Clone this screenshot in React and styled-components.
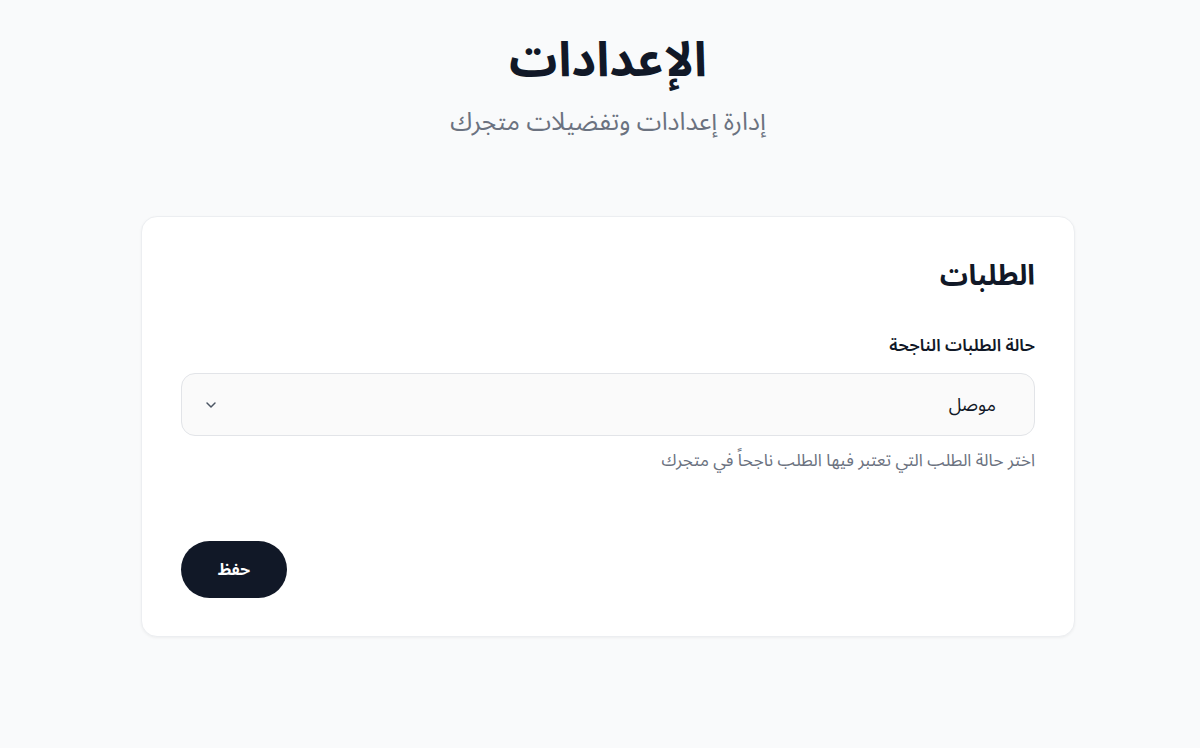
import React from 'react';
import styled, { createGlobalStyle } from 'styled-components';

const GlobalStyle = createGlobalStyle`
  html, body {
    margin: 0;
    padding: 0;
    background: #f9fafb;
  }
  body {
    font-family: 'Noto Sans Arabic', 'Noto Sans', 'DejaVu Sans', sans-serif;
    color: #111827;
  }
`;

const Page = styled.div`
  min-height: 748px;
  padding: 25px 0 40px 16px;
  box-sizing: border-box;
  direction: rtl;
`;

const Header = styled.header`
  text-align: center;
  margin-bottom: 76px;
`;

const Title = styled.h1`
  font-size: 48px;
  font-weight: 700;
  margin: 0;
  line-height: 72px;
  color: #111827;
`;

const Subtitle = styled.p`
  font-size: 25px;
  color: #6b7280;
  margin: 7px 0 0;
  line-height: 36px;
`;

const Card = styled.section`
  width: 934px;
  margin: 0 auto;
  box-sizing: border-box;
  background: #ffffff;
  border: 1px solid #eceef1;
  border-radius: 16px;
  box-shadow: 0 1px 3px rgba(0, 0, 0, 0.05);
  padding: 38px 39px 38px 39px;
`;

const SectionTitle = styled.h2`
  font-size: 28px;
  font-weight: 700;
  margin: 2px 0 38px;
  line-height: 1.4;
`;

const Field = styled.div`
  display: flex;
  flex-direction: column;
`;

const Label = styled.label`
  font-size: 17px;
  font-weight: 600;
  line-height: 24px;
  margin-bottom: 15px;
`;

const SelectBox = styled.button`
  display: flex;
  align-items: center;
  justify-content: space-between;
  height: 63px;
  padding: 0 38px 0 21px;
  background: #fafafa;
  border: 1px solid #e2e4e8;
  border-radius: 14px;
  font-family: inherit;
  font-size: 18px;
  color: #111827;
  cursor: pointer;
  direction: rtl;
`;

const Hint = styled.p`
  font-size: 17px;
  color: #6b7280;
  margin: 13px 0 0;
  line-height: 24px;
`;

const Actions = styled.div`
  display: flex;
  justify-content: flex-end;
  margin-top: 68px;
`;

const SaveButton = styled.button`
  width: 106px;
  height: 57px;
  border: none;
  border-radius: 999px;
  background: #111827;
  color: #ffffff;
  font-family: inherit;
  font-size: 16px;
  font-weight: 700;
  cursor: pointer;
`;

const Chevron = () => (
  <svg width="16" height="16" viewBox="0 0 24 24" fill="none" stroke="#4b5563" strokeWidth="2.2" strokeLinecap="round" strokeLinejoin="round">
    <path d="m6 9 6 6 6-6" />
  </svg>
);

export default function App() {
  return (
    <>
      <GlobalStyle />
      <Page>
        <Header>
          <Title>الإعدادات</Title>
          <Subtitle>إدارة إعدادات وتفضيلات متجرك</Subtitle>
        </Header>
        <Card>
          <SectionTitle>الطلبات</SectionTitle>
          <Field>
            <Label>حالة الطلبات الناجحة</Label>
            <SelectBox type="button">
              <span>موصل</span>
              <Chevron />
            </SelectBox>
            <Hint>اختر حالة الطلب التي تعتبر فيها الطلب ناجحاً في متجرك</Hint>
          </Field>
          <Actions>
            <SaveButton type="button">حفظ</SaveButton>
          </Actions>
        </Card>
      </Page>
    </>
  );
}
